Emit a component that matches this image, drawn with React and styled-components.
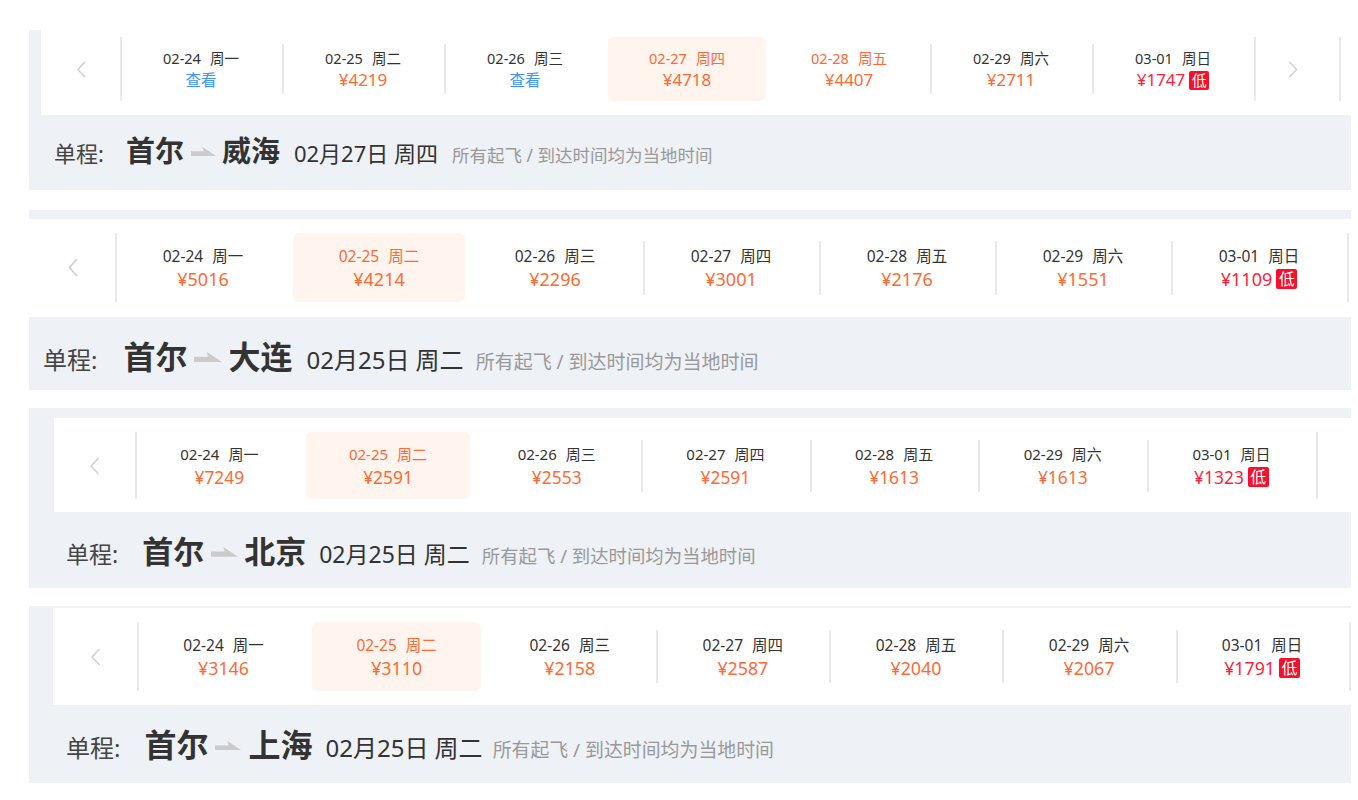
import React from "react";
import styled, { createGlobalStyle } from "styled-components";

const Global = createGlobalStyle`
  html, body { margin: 0; padding: 0; background: #fff; overflow: hidden; }
  body { font-family: "Noto Sans", "Noto Sans CJK SC", sans-serif; color: #333; }
`;

const Page = styled.div`
  display: flex;
  flex-direction: column;
  padding-top: 30px;
  width: 1358px;
  height: 800px;
  box-sizing: border-box;
`;

const Panel = styled.section`
  margin: ${(p) => p.$mt}px 0 0 29px;
  width: 1322px;
  background: #eef1f6;
  padding-top: ${(p) => p.$padTop}px;
  overflow: ${(p) => (p.$clip ? "hidden" : "visible")};
  box-sizing: border-box;
`;

const DateBar = styled.div`
  display: flex;
  background: #fff;
  margin-left: ${(p) => p.$left}px;
  width: ${(p) => p.$width}px;
  padding: ${(p) => p.$pt}px 0 ${(p) => p.$pb}px;
  box-sizing: border-box;
`;

const ArrowCell = styled.div`
  position: relative;
  flex: 0 0 ${(p) => p.$w}px;
  height: ${(p) => p.$h}px;
  display: flex;
  align-items: center;
  justify-content: center;
  padding-right: ${(p) => p.$shift || 0}px;
  box-sizing: border-box;
  &::after {
    content: "";
    position: absolute;
    top: 0;
    bottom: 0;
    right: -1px;
    width: 2px;
    background: #e9e9e9;
  }
  &::before {
    content: "";
    display: ${(p) => (p.$right ? "block" : "none")};
    position: absolute;
    top: 0;
    bottom: 0;
    left: -1px;
    width: 2px;
    background: #e9e9e9;
  }
`;

const DateCell = styled.div`
  position: relative;
  flex: 0 0 ${(p) => p.$w}px;
  height: ${(p) => p.$h}px;
  display: flex;
  &::before {
    content: "";
    display: ${(p) => (p.$sep ? "block" : "none")};
    position: absolute;
    left: -1px;
    top: 50%;
    height: ${(p) => p.$sepH}px;
    margin-top: ${(p) => -p.$sepH / 2}px;
    width: 2px;
    background: #e9e9e9;
  }
`;

const CellInner = styled.div`
  flex: 1;
  margin: 0 3px 0 1px;
  border-radius: 6px;
  background: ${(p) => (p.$selected ? "#fff5ee" : "transparent")};
  display: flex;
  flex-direction: column;
  align-items: center;
  justify-content: center;
  line-height: ${(p) => p.$lh}px;
`;

const DateLine = styled.div`
  font-size: ${(p) => p.$fs}px;
  color: ${(p) => (p.$hl ? "#ff6a35" : "#333")};
  white-space: nowrap;
`;

const Week = styled.span`
  margin-left: 9px;
`;

const PriceLine = styled.div`
  display: flex;
  align-items: center;
  font-size: ${(p) => p.$fs}px;
  color: ${(p) => (p.$low ? "#ff1f3d" : "#ff6a35")};
  white-space: nowrap;
`;

const ViewLink = styled.span`
  color: #3a97f5;
  font-size: ${(p) => p.$fs}px;
`;

const LowBadge = styled.span`
  display: inline-flex;
  align-items: center;
  justify-content: center;
  margin-left: 4px;
  width: ${(p) => p.$s + 1}px;
  height: ${(p) => p.$s}px;
  border-radius: 2px;
  background: #f5102c;
  color: #fff;
  font-size: ${(p) => p.$s - 4}px;
  line-height: 1;
`;

const RouteRow = styled.div`
  display: flex;
  align-items: baseline;
  height: ${(p) => p.$h}px;
  padding: ${(p) => p.$pt}px 0 0 ${(p) => p.$pl}px;
  box-sizing: border-box;
  white-space: nowrap;
`;

const Label = styled.span`
  font-size: ${(p) => p.$fs}px;
  line-height: 1;
  color: #444;
  margin-right: ${(p) => p.$gap}px;
`;

const Cities = styled.span`
  display: inline-flex;
  align-items: center;
`;

const City = styled.span`
  font-size: ${(p) => p.$fs}px;
  line-height: 1;
  font-weight: 700;
  color: #333;
`;

const RouteArrow = styled.svg`
  margin: ${(p) => p.$dy}px 6px 0 7px;
  flex: 0 0 auto;
`;

const RouteDate = styled.span`
  font-size: ${(p) => p.$fs}px;
  line-height: 1;
  color: #333;
  margin-left: ${(p) => p.$gap}px;
`;

const Note = styled.span`
  font-size: ${(p) => p.$fs}px;
  line-height: 1;
  color: #999;
  margin-left: ${(p) => p.$gap}px;
`;

const Chevron = ({ right, size }) => (
  <svg width={size * 0.62} height={size} viewBox="0 0 11 18" fill="none">
    <path
      d={right ? "M2 1.5 L9 9 L2 16.5" : "M9 1.5 L2 9 L9 16.5"}
      stroke="#d2d2d2"
      strokeWidth="1.7"
      strokeLinecap="round"
      strokeLinejoin="round"
    />
  </svg>
);

const weeks = ["周一", "周二", "周三", "周四", "周五", "周六", "周日"];
const days = ["02-24", "02-25", "02-26", "02-27", "02-28", "02-29", "03-01"];

const panels = [
  {
    mt: 0, padTop: 0, clip: false,
    bar: { left: 12, width: 1340, pt: 7, pb: 14, h: 64, arrowW: 80, rightW: 85, rightShift: 8, cellW: 162, sepH: 50, dateFs: 14.5, priceFs: 17, lh: 22, badge: 19, chevron: 17 },
    prices: ["view", "¥4219", "view", "¥4718", "¥4407", "¥2711", "¥1747"],
    selected: 3, hl: [3, 4],
    route: { h: 75, pl: 25, pt: 21, label: 22, labelGap: 22, city: 29, date: 22, dateGap: 14, note: 17.5, noteGap: 14, arrowW: 25, dy: 1 },
    dest: "威海", dateText: "02月27日 周四",
  },
  {
    mt: 20, padTop: 9, clip: true,
    bar: { left: 0, width: 1322, pt: 14, pb: 15, h: 69, arrowW: 87, rightW: 87, rightShift: 0, cellW: 176, sepH: 54, dateFs: 15.5, priceFs: 18, lh: 23, badge: 20, chevron: 19 },
    prices: ["¥5016", "¥4214", "¥2296", "¥3001", "¥2176", "¥1551", "¥1109"],
    selected: 1, hl: [1],
    route: { h: 73, pl: 14, pt: 24, label: 24, labelGap: 26, city: 32, date: 24, dateGap: 14, note: 19, noteGap: 12, arrowW: 28, dy: 1 },
    dest: "大连", dateText: "02月25日 周二",
  },
  {
    mt: 18, padTop: 10, clip: true,
    bar: { left: 25, width: 1297, pt: 14, pb: 13, h: 67, arrowW: 82, rightW: 82, rightShift: 0, cellW: 168.7, sepH: 52, dateFs: 15, priceFs: 17.4, lh: 23, badge: 20, chevron: 18 },
    prices: ["¥7249", "¥2591", "¥2553", "¥2591", "¥1613", "¥1613", "¥1323"],
    selected: 1, hl: [1],
    route: { h: 76, pl: 37, pt: 24, label: 23, labelGap: 24, city: 31, date: 23, dateGap: 13, note: 18.4, noteGap: 12, arrowW: 27, dy: 1 },
    dest: "北京", dateText: "02月25日 周二",
  },
  {
    mt: 18, padTop: 2, clip: true,
    bar: { left: 24, width: 1298, pt: 14, pb: 14, h: 69, arrowW: 85, rightW: 85, rightShift: 0, cellW: 173.1, sepH: 53, dateFs: 15.5, priceFs: 17.8, lh: 23, badge: 20, chevron: 18 },
    prices: ["¥3146", "¥3110", "¥2158", "¥2587", "¥2040", "¥2067", "¥1791"],
    selected: 1, hl: [1],
    route: { h: 78, pl: 37, pt: 24, label: 24, labelGap: 24, city: 32, date: 24, dateGap: 13, note: 18.9, noteGap: 10, arrowW: 27, dy: 1 },
    dest: "上海", dateText: "02月25日 周二",
  },
];

const FlightArrow = ({ w, dy }) => (
  <RouteArrow width={w} height={w * 0.36} viewBox="0 0 25 9" $dy={dy}>
    <polygon points="0,4.2 12.5,4.2 11.5,0 25,9 0,9" fill="#cbcbcb" />
  </RouteArrow>
);

const CalendarPanel = ({ cfg }) => {
  const b = cfg.bar;
  const r = cfg.route;
  return (
    <Panel $mt={cfg.mt} $padTop={cfg.padTop} $clip={cfg.clip}>
      <DateBar $left={b.left} $width={b.width} $pt={b.pt} $pb={b.pb}>
        <ArrowCell $w={b.arrowW} $h={b.h}>
          <Chevron size={b.chevron} />
        </ArrowCell>
        {days.map((d, i) => {
          const sel = i === cfg.selected;
          const sep = i > 0 && !sel && i - 1 !== cfg.selected;
          const price = cfg.prices[i];
          const low = i === 6;
          return (
            <DateCell key={d} $w={b.cellW} $h={b.h} $sep={sep} $sepH={b.sepH}>
              <CellInner $selected={sel} $lh={b.lh}>
                <DateLine $fs={b.dateFs} $hl={cfg.hl.includes(i)}>
                  {d}
                  <Week>{weeks[i]}</Week>
                </DateLine>
                {price === "view" ? (
                  <ViewLink $fs={b.dateFs + 1}>查看</ViewLink>
                ) : (
                  <PriceLine $fs={b.priceFs} $low={low}>
                    {price}
                    {low && <LowBadge $s={b.badge}>低</LowBadge>}
                  </PriceLine>
                )}
              </CellInner>
            </DateCell>
          );
        })}
        <ArrowCell $w={b.rightW} $h={b.h} $right $shift={b.rightShift}>
          <Chevron right size={b.chevron} />
        </ArrowCell>
      </DateBar>
      <RouteRow $h={r.h} $pl={r.pl} $pt={r.pt}>
        <Label $fs={r.label} $gap={r.labelGap}>单程:</Label>
        <Cities>
          <City $fs={r.city}>首尔</City>
          <FlightArrow w={r.arrowW} dy={r.dy} />
          <City $fs={r.city}>{cfg.dest}</City>
        </Cities>
        <RouteDate $fs={r.date} $gap={r.dateGap}>{cfg.dateText}</RouteDate>
        <Note $fs={r.note} $gap={r.noteGap}>所有起飞 / 到达时间均为当地时间</Note>
      </RouteRow>
    </Panel>
  );
};

export default function App() {
  return (
    <>
      <Global />
      <Page>
        {panels.map((p, i) => (
          <CalendarPanel key={i} cfg={p} />
        ))}
      </Page>
    </>
  );
}
